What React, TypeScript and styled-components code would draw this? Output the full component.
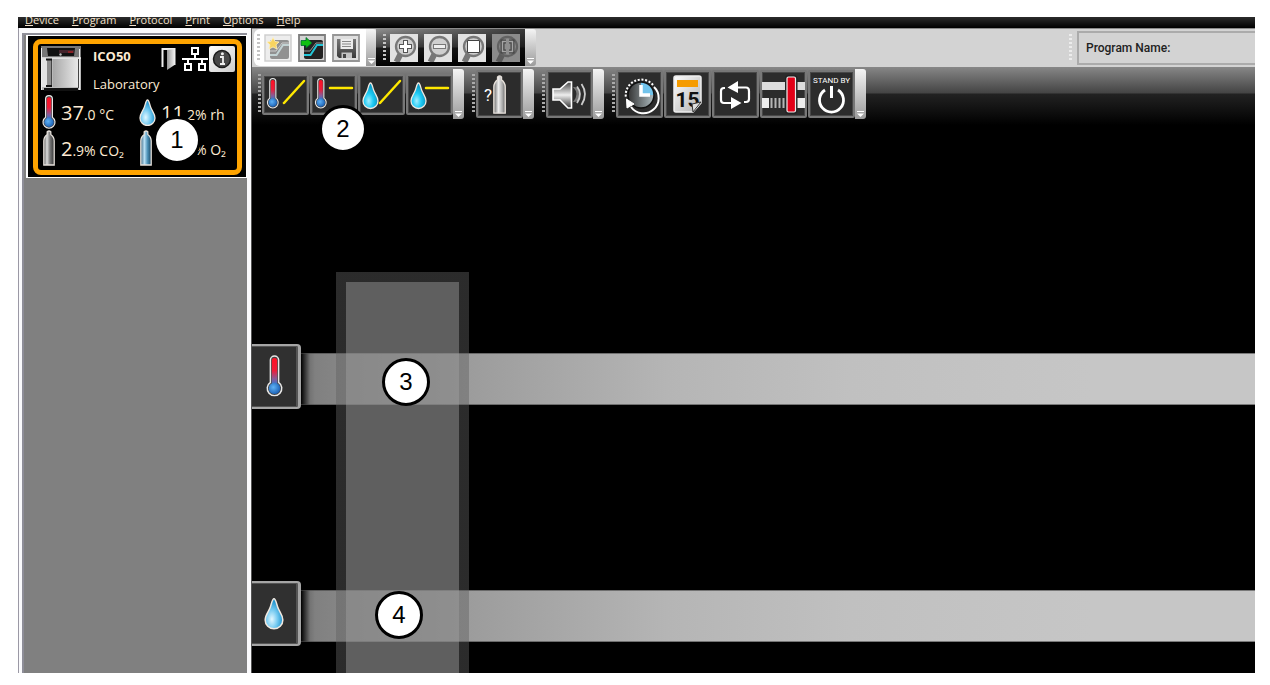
import React from 'react';
import styled, { createGlobalStyle, css } from 'styled-components';

const GlobalStyle = createGlobalStyle`
  *, *::before, *::after { box-sizing: border-box; }
  body { margin: 0; background: #fff; font-family: "Open Sans", "Noto Sans", sans-serif; }
  button { padding: 0; margin: 0; border: 0; background: none; color: inherit; font: inherit; cursor: pointer; }
  svg { display: block; flex: none; }
`;

const Page = styled.div`
  display: flex;
  min-height: 100vh;
  padding: 17px 15px 12px 18px;
`;

const AppWindow = styled.div`
  flex: 1;
  min-width: 0;
  display: flex;
  flex-direction: column;
  background: #000;
`;

const MenuBar = styled.nav`
  display: flex;
  align-items: flex-end;
  gap: 13px;
  height: 11px;
  padding: 0 7px;
  overflow: hidden;
  background: linear-gradient(#2c2c2c, #000);
`;

const MenuItem = styled.button`
  color: #f3e2cc;
  font-size: 11px;
  line-height: 16px;
  &::first-letter { text-decoration: underline; }
`;

const Body = styled.div`
  flex: 1;
  display: flex;
`;

const Sidebar = styled.aside`
  width: 234px;
  flex: none;
  padding: 5px 4px 0 3px;
  background: #fafafc;
  border-left: 1px solid #9b99a5;
  border-right: 1px solid #555;
`;

const DeviceList = styled.div`
  height: 100%;
  padding-left: 2px;
  background: #808080;
  border: solid #8e8e98;
  border-width: 2px 0 0 2px;
`;

const DeviceCard = styled.section`
  position: relative;
  padding: 3px 4px 2px 5px;
  background: #000;
  border: solid #fff;
  border-width: 1px 1px 1px 2px;
`;

const CardFrame = styled.div`
  height: 136px;
  padding: 2px 2px 0 3px;
  border: 5px solid #ffa400;
  border-radius: 8px;
  color: #fdebd3;
  font-size: 13px;
`;

const CardHead = styled.header`
  display: flex;
  height: 48px;
`;

const CardTitle = styled.div`
  flex: 1;
  padding-left: 12px;
`;

const DeviceName = styled.h2`
  margin: 0;
  font-size: 13px;
  line-height: 20px;
  font-weight: 700;
`;

const Place = styled.p`
  margin: 8px 0 0;
  line-height: 20px;
`;

const StatusIcons = styled.div`
  display: flex;
  align-items: flex-start;
  gap: 1px;
`;

const InfoButton = styled.button`
  width: 26px;
  height: 26px;
  border-radius: 2px;
  background: linear-gradient(135deg, #fff, #ccc);
`;

const Readings = styled.div`
  display: grid;
  grid-template-columns: 97px 1fr;
  grid-auto-rows: 36px;
  padding-left: 1px;
`;

const Reading = styled.div`
  display: flex;
  align-items: center;
  gap: 5px;
  white-space: nowrap;
`;

const Value = styled.span`
  display: flex;
  align-items: baseline;
  padding-top: 4px;
  font-size: 14px;
  line-height: 32px;
`;

const Big = styled.span<{ $room?: number }>`
  min-width: ${p => p.$room || 0}px;
  font-size: 20px;
`;

const Badge = styled.span<{ $x: number; $y: number }>`
  position: absolute;
  z-index: 3;
  left: ${p => p.$x}px;
  top: ${p => p.$y}px;
  width: 48px;
  height: 48px;
  border: 3px solid #000;
  border-radius: 50%;
  background: #fff;
  color: #000;
  font: 24px/42px "Liberation Sans", Arial, sans-serif;
  text-align: center;
`;

const Main = styled.main`
  flex: 1;
  min-width: 0;
  display: flex;
  flex-direction: column;
`;

const FileRow = styled.div`
  display: flex;
  height: 39px;
  padding: 0 0 1px 2px;
  background: #d3d3d3;
  border-top: 1px solid #8b8b8b;
`;

const Grip = styled.i<{ $tone?: string; $h: number }>`
  width: 4px;
  flex: none;
  height: ${p => p.$h}px;
  background: repeating-linear-gradient(${p => p.$tone || '#c4c4c4'} 0 2px, transparent 2px 4px);
  border-right: 1px solid transparent;
  background-clip: padding-box;
`;

const Strip = styled.div<{ $dark?: boolean }>`
  display: flex;
  align-items: center;
  gap: 6px;
  padding: ${p => (p.$dark ? '0 5px 0 7px' : '0 6px 0 3px')};
  border-radius: ${p => (p.$dark ? '0' : '6px 0 0 6px')};
  background: ${p => (p.$dark
    ? 'linear-gradient(90deg, transparent, rgba(0, 0, 0, 0.6)), linear-gradient(#8f8f8f, #444 48%, #1c1c1c 52%, #000)'
    : '#fff')};
  ${Grip} { margin-right: -3px; }
`;

const SmallButton = styled.button`
  width: 28px;
  height: 28px;
`;

const CapButton = styled.button<{ $w: number }>`
  width: ${p => p.$w}px;
  display: flex;
  align-items: flex-end;
  justify-content: center;
  padding-bottom: 2px;
  border-radius: 0 3px 3px 0;
  background: linear-gradient(#f4f4f4, #9b9b9b);
`;

const ProgramBar = styled.div`
  display: flex;
  align-items: center;
  gap: 4px;
  width: 186px;
  margin-left: auto;
`;

const ProgramField = styled.label`
  flex: 1;
  min-width: 0;
  height: 34px;
  display: flex;
  align-items: center;
  gap: 4px;
  padding-left: 7px;
  border: solid #ababab;
  border-width: 2px 0 2px 2px;
  color: #222;
  font: 500 12px/16px Roboto, sans-serif;
`;

const ProgramInput = styled.input`
  flex: 1;
  min-width: 0;
  border: 0;
  outline: 0;
  background: none;
  font: inherit;
`;

const Work = styled.div`
  flex: 1;
  position: relative;
  background: linear-gradient(#878787 0, #444 26px, #222 27px, #000 58px);
`;

const ToolRow = styled.div`
  position: relative;
  z-index: 2;
  display: flex;
  gap: 8px;
  padding: 2px 0 0 6px;
`;

const ToolGroup = styled.div`
  display: flex;
  align-items: stretch;
  height: 50px;
`;

const Tools = styled.div`
  display: flex;
  align-items: center;
  gap: 1px;
  ${Grip} { margin-right: -1px; }
`;

const ToolButton = styled.button<{ $low?: boolean }>`
  width: 47px;
  height: ${p => (p.$low ? 41 : 48)}px;
  display: flex;
  align-items: center;
  justify-content: center;
  overflow: hidden;
  background: #2c2c2c;
  border: 2px solid #777;
  border-radius: 2px;
  box-shadow: inset 0 0 0 1px #484848;
`;

const Lanes = styled.div`
  display: flex;
  flex-direction: column;
  gap: 172px;
  padding: 225px 0 27px;
`;

const Lane = styled.div`
  display: flex;
  align-items: flex-end;
`;

const LaneTab = styled.button`
  width: 49px;
  height: 65px;
  display: flex;
  align-items: center;
  justify-content: center;
  padding-right: 2px;
  background: #303030;
  border: solid #a5a5a5;
  border-width: 2px 3px 2px 0;
  border-radius: 0 4px 4px 0;
  box-shadow: inset -1px 0 0 1px #555;
`;

const LaneTrack = styled.div`
  flex: 1;
  height: 52px;
  margin-bottom: 4px;
  background: linear-gradient(90deg, #000 0, #737373 9px, #808080 14px, #858585 36px, #9c9c9c 168px, #b5b5b5 366px, #c0c0c0 549px, #c6c6c6 790px);
  border: solid rgba(70, 70, 70, 0.6);
  border-width: 1px 0;
`;

const TimeColumn = styled.div`
  position: absolute;
  z-index: 1;
  left: 84px;
  top: 205px;
  bottom: 0;
  width: 133px;
  padding: 10px 10px 0;
  display: flex;
  background: linear-gradient(rgba(96, 96, 96, 0.45), rgba(96, 96, 96, 0.45)) top / 100% 10px no-repeat,
    linear-gradient(rgba(96, 96, 96, 0.45), rgba(96, 96, 96, 0.45)) 0 10px / 10px 100% no-repeat,
    linear-gradient(rgba(96, 96, 96, 0.45), rgba(96, 96, 96, 0.45)) 123px 10px / 10px 100% no-repeat;
`;

const TimeFill = styled.div`
  flex: 1;
  background: rgba(138, 138, 138, 0.69);
`;

const SharedDefs = styled.svg`
  position: absolute;
`;

const Defs = () => (
  <SharedDefs width="0" height="0" aria-hidden="true">
    <defs>
      <linearGradient id="therm" x1="0" y1="0" x2="0" y2="1">
        <stop offset="0" stopColor="#ff1024" /><stop offset=".45" stopColor="#ee1c38" />
        <stop offset=".75" stopColor="#8a5a96" /><stop offset="1" stopColor="#2a7bd8" />
      </linearGradient>
      <radialGradient id="bulb" cx=".4" cy=".4" r=".7">
        <stop offset="0" stopColor="#5fb2f5" /><stop offset="1" stopColor="#1458ae" />
      </radialGradient>
      <radialGradient id="drop" cx=".38" cy=".68" r=".6">
        <stop offset="0" stopColor="#e2f7ff" /><stop offset=".55" stopColor="#70c8f0" /><stop offset="1" stopColor="#2596cf" />
      </radialGradient>
      <radialGradient id="cyanDrop" cx=".38" cy=".7" r=".6">
        <stop offset="0" stopColor="#a5f0ff" /><stop offset=".5" stopColor="#1ecbf5" /><stop offset="1" stopColor="#0b9ac5" />
      </radialGradient>
      <linearGradient id="steel">
        <stop offset="0" stopColor="#555" /><stop offset=".3" stopColor="#ddd" />
        <stop offset=".6" stopColor="#777" /><stop offset="1" stopColor="#333" />
      </linearGradient>
      <linearGradient id="brightSteel">
        <stop offset="0" stopColor="#666" /><stop offset=".4" stopColor="#eee" />
        <stop offset=".75" stopColor="#aaa" /><stop offset="1" stopColor="#666" />
      </linearGradient>
      <linearGradient id="blueSteel">
        <stop offset="0" stopColor="#416c88" /><stop offset=".35" stopColor="#b9e0f5" />
        <stop offset=".65" stopColor="#4c91b7" /><stop offset="1" stopColor="#1c4660" />
      </linearGradient>
      <linearGradient id="paper" x1="0" y1="0" x2="1" y2="1">
        <stop offset="0" stopColor="#fff" /><stop offset="1" stopColor="#b0b0b0" />
      </linearGradient>
      <linearGradient id="chrome" x1="0" y1="0" x2="1" y2="0">
        <stop offset="0" stopColor="#a8a8a8" /><stop offset="1" stopColor="#e8e8e8" />
      </linearGradient>
      <linearGradient id="horn" x1="0" y1="0" x2="0" y2="1">
        <stop offset="0" stopColor="#444" /><stop offset=".5" stopColor="#eee" /><stop offset="1" stopColor="#333" />
      </linearGradient>
      <linearGradient id="disk" x1="0" y1="0" x2="0" y2="1">
        <stop offset="0" stopColor="#777" /><stop offset="1" stopColor="#3a3a3a" />
      </linearGradient>
      <linearGradient id="door"><stop offset="0" stopColor="#999" /><stop offset="1" stopColor="#eee" /></linearGradient>
      <linearGradient id="face" x1="0" y1="0" x2="1" y2="0">
        <stop offset="0" stopColor="#333" /><stop offset="1" stopColor="#aebcc0" />
      </linearGradient>
    </defs>
  </SharedDefs>
);

const ThermShape = () => (
  <>
    <path d="M3.6 4a3.400 3.400 0 0 1 6.800 0V22.300a6 6 0 1 1-6.800 0Z" fill="#444" stroke="#e8e8e8" strokeWidth="1.200" />
    <path d="M4.800 4.500a2.200 2.200 0 0 1 4.400 0v20.500H4.800Z" fill="url(#therm)" />
    <circle cx="7" cy="27.300" r="4.700" fill="url(#bulb)" />
  </>
);
const Thermometer = ({ w = 14, h = 35 }: { w?: number; h?: number }) => (
  <svg width={w} height={h} viewBox="0 0 14 35"><ThermShape /></svg>
);

const DropShape = ({ fill }: { fill: string }) => (
  <path d="M8.500 1C10 1 10.500 4.800 11.600 8C13 12 16 14.600 16 19A7.500 7.500 0 0 1 1 19C1 14.600 4 12 5.400 8C6.500 4.800 7 1 8.500 1Z"
    fill={fill} stroke="#f0e8e0" strokeWidth="1.300" />
);
const Drop = ({ w = 17, h = 27 }: { w?: number; h?: number }) => (
  <svg width={w} height={h} viewBox="0 0 17 27"><DropShape fill="url(#drop)" /></svg>
);

const BottleShape = ({ fill }: { fill: string }) => (
  <path d="M4.200 1.800Q6 .2 7.800 1.800V4.500Q11.200 7 11.200 11V35H.8V11Q.8 7 4.200 4.500Z" fill={fill} stroke="#e6e0da" strokeWidth="1.300" />
);
const Bottle = ({ fill }: { fill: string }) => (
  <svg width="14" height="36" viewBox="-1 0 14 36"><BottleShape fill={fill} /></svg>
);

const Incubator = () => (
  <svg width="40" height="45" viewBox="0 0 40 45">
    <path d="M0 0H40V44H0Z" fill="#b9b9b9" />
    <path d="M0 0H40V12H0Z" fill="#777" />
    <path d="M6 2H34L33 10H7Z" fill="#111" />
    <path d="M18 4H33V7H18Z" fill="#43232b" /><path d="M27 6h5" stroke="#d02020" />
    <circle cx="19.500" cy="8.500" r="1.200" fill="#bbb" />
    <path d="M0 12H40" stroke="#eee" strokeWidth="1.500" />
    <path d="M12 13H37V41H12Z" fill="url(#chrome)" />
    <path d="M1 13H6V41H1Z" fill="#e3e3e3" />
    <path d="M6 13H11V41H6Z" fill="#8c8c8c" /><path d="M10.500 13V41M37.500 13V42" stroke="#444" />
    <path d="M5 13.500h6M5 40h6" stroke="#111" strokeWidth="2" />
    <path d="M3 42H37V45H3Z" fill="#111" /><path d="M38.500 3V44M.5 2V44" stroke="#eee" />
  </svg>
);

const Door = () => (
  <svg width="20" height="24" viewBox="0 0 20 24">
    <path d="M1.500 21V3H13.500V19" fill="none" stroke="#eee" strokeWidth="2" />
    <path d="M6 4L13.500 3V19L6 24Z" fill="url(#door)" />
  </svg>
);

const Network = () => (
  <svg width="26" height="26" viewBox="0 0 26 26" fill="none" stroke="#fff" strokeWidth="2">
    <path d="M10 2H16V8H10ZM3 18H9V24H3ZM17 18H23V24H17ZM13 8V13M0 13H26M6 13V18M20 13V18" />
  </svg>
);

const Info = () => (
  <svg width="26" height="26" viewBox="0 0 26 26">
    <circle cx="13" cy="13" r="8.500" fill="#484848" stroke="#1b1b1b" strokeWidth="1.500" />
    <path d="M11 11h3v7M11 18h5" stroke="#eee" strokeWidth="1.800" fill="none" />
    <circle cx="13.400" cy="7.800" r="1.500" fill="#eee" />
  </svg>
);

const Curve = ({ faded }: { faded?: boolean }) => (
  <>
    <rect x="6" y="6" width="19" height="19" rx="2" fill={faded ? '#919191' : '#222'} />
    <path d="M6 17H12L18 9H25" fill="none" stroke={faded ? '#ccc' : '#999'} strokeWidth="1" />
    <path d="M6 21H12.500L19 11H25" fill="none" stroke={faded ? '#c3d3d4' : '#22c6d8'} strokeWidth="2" />
  </>
);

const NewProgram = () => (
  <svg width="28" height="28" viewBox="0 0 28 28">
    <path d="M1 1H27V27H1Z" fill="#ededed" stroke="#cfcfcf" strokeWidth="1.500" />
    <Curve faded />
    <path d="M9 3.500L11 7.500L15 8L12 10.800L13 15L9 13L5 15L6 10.800L3 8L7 7.500Z" fill="#f8d460" stroke="#fff0bd" strokeWidth=".8" />
  </svg>
);
const OpenProgram = () => (
  <svg width="28" height="28" viewBox="0 0 28 28">
    <path d="M1 1H27V27H1Z" fill="#d4d4d4" stroke="#7d7d7d" strokeWidth="1.800" />
    <Curve />
    <path d="M3 6.500H8V3.500L14 9L8 14V11.500H3Z" fill="#10c010" stroke="#063" strokeWidth=".8" />
  </svg>
);
const Save = () => (
  <svg width="28" height="28" viewBox="0 0 28 28">
    <path d="M1 1H27V27H1Z" fill="#dedede" stroke="#969696" strokeWidth="1.800" />
    <path d="M5 5H24V24H7L5 22Z" fill="url(#disk)" /><path d="M8.500 5H21V15H8.500Z" fill="#ececec" />
    <path d="M10 7.500H19M10 10H19M10 12.500H19" stroke="#888" />
    <path d="M9.500 18.500H20V24H9.500Z" fill="#c4c4c4" /><path d="M11 20H14V24H11Z" fill="#444" />
  </svg>
);

const Magnifier = ({ children, dim }: { children: React.ReactNode; dim?: boolean }) => (
  <svg width="28" height="28" viewBox="0 0 28 28">
    <path d="M0 0H28V28H0Z" fill={dim ? '#8b8b8b' : '#e2e2e2'} />
    <path d="M10.500 20L6.500 28" stroke={dim ? '#5c5c5c' : '#777'} strokeWidth="6" />
    <circle cx="15.500" cy="12.500" r="9.500" fill={dim ? '#8f8f8f' : '#cfcfcf'} stroke={dim ? '#626262' : '#787878'} strokeWidth="2.300" />
    {children}
  </svg>
);

const Arrow = () => (
  <svg width="7" height="6" viewBox="0 0 7 6"><path d="M0 .5H7" stroke="#fff" /><path d="M0 2.500H7L3.500 6Z" fill="#fff" /></svg>
);

const ToolCanvas = ({ children, h = 43 }: { children: React.ReactNode; h?: number }) => (
  <svg width="43" height={h} viewBox={`0 0 43 ${h}`}>{children}</svg>
);

const Profile = ({ drop, flat }: { drop?: boolean; flat?: boolean }) => (
  <ToolCanvas h={37}>
    {drop
      ? <g transform="translate(2 6)"><DropShape fill="url(#cyanDrop)" /></g>
      : <g transform="translate(2.500 2) scale(.9)"><ThermShape /></g>}
    <path d={flat ? 'M18 12H40' : 'M20 27L40 5'} stroke="#ffe800" strokeWidth="2.500" strokeLinecap="round" />
  </ToolCanvas>
);

const GasBottle = () => (
  <ToolCanvas>
    <text x="6" y="28" fill="#fff" fontFamily="Roboto, sans-serif" fontSize="17">?</text>
    <g transform="translate(15 2) scale(1.090)"><BottleShape fill="url(#brightSteel)" /></g>
  </ToolCanvas>
);

const Speaker = () => (
  <ToolCanvas>
    <path d="M25 14Q32 21 25 29Q31 30 32 21Q31 13 25 14Z" fill="#777" />
    <path d="M5 16H12L20 9H23.500V35H20L12 27H5Z" fill="url(#horn)" stroke="#fff" strokeWidth="1.600" />
    <path d="M29 13.500Q35 21 29 30M33.500 11Q40.500 21 33.500 32" fill="none" stroke="#ccc" strokeWidth="1.800" />
  </ToolCanvas>
);

const Clock = () => (
  <ToolCanvas>
    <circle cx="23" cy="22" r="13" fill="url(#face)" />
    <path d="M23 22V9A13 13 0 0 1 36 22Z" fill="#72c4ec" />
    <path d="M23 12V22H32" fill="none" stroke="#fff" strokeWidth="3.500" />
    <path d="M36 14A15.300 15.300 0 1 1 13 34" fill="none" stroke="#fff" strokeWidth="2" />
    <circle cx="23" cy="22" r="13" fill="none" stroke="#111" strokeWidth="1.500" />
    <path d="M35 12A15.500 15.500 0 0 0 8 25" fill="none" stroke="#fff" strokeWidth="2" strokeDasharray="2 1.700" />
    <path d="M8.500 26L16 31L9 35Z" fill="#fff" stroke="#fff" />
  </ToolCanvas>
);

const Calendar = () => (
  <ToolCanvas>
    <path d="M10 3H33Q35 3 35 5V30L27 39H10Q8 39 8 37V5Q8 3 10 3Z" fill="url(#paper)" stroke="#eee" strokeWidth="1.500" />
    <path d="M11 7H32V14H11Z" fill="#f59b00" />
    <text x="21.500" y="34" textAnchor="middle" fill="#111" fontFamily="Roboto, sans-serif" fontWeight="700" fontSize="21">15</text>
    <path d="M35 29L27 39L26 31Z" fill="#ddd" stroke="#333" />
  </ToolCanvas>
);

const Loop = () => (
  <ToolCanvas>
    <path d="M11 15H10Q7 15 7 18V27Q7 30 10 30H17M22 14.500H32Q35 14.500 35 18V26Q35 29 32 29H30" fill="none" stroke="#fff" strokeWidth="2.200" />
    <path d="M24 8V20L13.500 14.500ZM17 24V36L27.500 30Z" fill="#fff" />
  </ToolCanvas>
);

const Slider = () => (
  <ToolCanvas>
    <path d="M0 9H43V17H0Z" fill="#ddd" />
    <path d="M0 25H7V35H0ZM34 25H43V35H34Z" fill="#eee" />
    <path d="M9.500 25V35M13.500 25V35M17.500 25V35M21.500 25V35" stroke="#b5b5b5" strokeWidth="2" />
    <rect x="25" y="4" width="8.500" height="35" rx="1.500" fill="#e30018" stroke="#222" strokeWidth="4" />
    <rect x="25" y="4" width="8.500" height="35" rx="1.500" fill="#e30018" stroke="#eee" strokeWidth="1.200" />
  </ToolCanvas>
);

const Standby = () => (
  <ToolCanvas>
    <text x="21.500" y="10" textAnchor="middle" fill="#fff" fontFamily="Roboto, sans-serif" fontSize="8">STAND BY</text>
    <path d="M15 17A12 12 0 1 0 28 17" fill="none" stroke="#fff" strokeWidth="2.800" />
    <path d="M21.500 13V25" stroke="#fff" strokeWidth="3" />
  </ToolCanvas>
);

type Tool = { label: string; icon: React.ReactNode; low?: boolean };

const toolGroups: Tool[][] = [
  [
    { label: 'Temperature ramp', icon: <Profile />, low: true },
    { label: 'Temperature hold', icon: <Profile flat />, low: true },
    { label: 'Humidity ramp', icon: <Profile drop />, low: true },
    { label: 'Humidity hold', icon: <Profile drop flat />, low: true },
  ],
  [{ label: 'Gas', icon: <GasBottle /> }],
  [{ label: 'Sound', icon: <Speaker /> }],
  [
    { label: 'Time', icon: <Clock /> },
    { label: 'Calendar', icon: <Calendar /> },
    { label: 'Loop', icon: <Loop /> },
    { label: 'Slider', icon: <Slider /> },
    { label: 'Standby', icon: <Standby /> },
  ],
];

const menus = ['Device', 'Program', 'Protocol', 'Print', 'Options', 'Help'];

export default function App() {
  return (
    <Page>
      <GlobalStyle />
      <Defs />
      <AppWindow>
        <MenuBar>
          {menus.map(m => <MenuItem key={m}>{m}</MenuItem>)}
        </MenuBar>
        <Body>
          <Sidebar>
            <DeviceList>
              <DeviceCard>
                <CardFrame>
                  <CardHead>
                    <Incubator />
                    <CardTitle>
                      <DeviceName>ICO50</DeviceName>
                      <Place>Laboratory</Place>
                    </CardTitle>
                    <StatusIcons>
                      <Door />
                      <Network />
                      <InfoButton aria-label="Info"><Info /></InfoButton>
                    </StatusIcons>
                  </CardHead>
                  <Readings>
                    <Reading><Thermometer /><Value><Big>37</Big>.0 °C</Value></Reading>
                    <Reading><Drop /><Value><Big $room={26}>11</Big>2% rh</Value></Reading>
                    <Reading><Bottle fill="url(#steel)" /><Value><Big>2</Big>.9% CO₂</Value></Reading>
                    <Reading><Bottle fill="url(#blueSteel)" /><Value><Big $room={37} />% O₂</Value></Reading>
                  </Readings>
                </CardFrame>
                <Badge $x={125} $y={80}>1</Badge>
              </DeviceCard>
            </DeviceList>
          </Sidebar>
          <Main>
            <FileRow>
              <Strip>
                <Grip $h={28} />
                <SmallButton aria-label="New program"><NewProgram /></SmallButton>
                <SmallButton aria-label="Open program"><OpenProgram /></SmallButton>
                <SmallButton aria-label="Save program"><Save /></SmallButton>
              </Strip>
              <CapButton $w={10} aria-label="File options"><Arrow /></CapButton>
              <Strip $dark>
                <Grip $h={28} />
                <SmallButton aria-label="Zoom in">
                  <Magnifier><path d="M15.500 6V19M9 12.500H22" stroke="#555" strokeWidth="5" /><path d="M15.500 7V18M10 12.500H21" stroke="#fff" strokeWidth="3" /></Magnifier>
                </SmallButton>
                <SmallButton aria-label="Zoom out">
                  <Magnifier><path d="M9 12.500H22" stroke="#777" strokeWidth="5" /><path d="M10 12.500H21" stroke="#eee" strokeWidth="3" /></Magnifier>
                </SmallButton>
                <SmallButton aria-label="Zoom to page">
                  <Magnifier><path d="M9.500 6.500H21.500V18.500H9.500Z" fill="#fff" stroke="#444" /></Magnifier>
                </SmallButton>
                <SmallButton aria-label="Zoom to selection">
                  <Magnifier dim><path d="M14 7.500H10.500V17.500H14M17 7.500H20.500V17.500H17" fill="none" stroke="#444" strokeWidth="4" /><path d="M14 7.500H10.500V17.500H14M17 7.500H20.500V17.500H17" fill="none" stroke="#a5a5a5" strokeWidth="1.500" /></Magnifier>
                </SmallButton>
              </Strip>
              <CapButton $w={11} aria-label="Zoom options"><Arrow /></CapButton>
              <ProgramBar>
                <Grip $h={28} $tone="#ececec" />
                <ProgramField>Program Name:<ProgramInput type="text" /></ProgramField>
              </ProgramBar>
            </FileRow>
            <Work>
              <ToolRow>
                {toolGroups.map((tools, i) => (
                  <ToolGroup key={i}>
                    <Tools>
                      <Grip $h={40} $tone="#aaa" />
                      {tools.map(t => (
                        <ToolButton key={t.label} $low={t.low} aria-label={t.label}>{t.icon}</ToolButton>
                      ))}
                    </Tools>
                    <CapButton $w={11} aria-label="More tools"><Arrow /></CapButton>
                  </ToolGroup>
                ))}
                <Badge $x={67} $y={38}>2</Badge>
              </ToolRow>
              <Lanes>
                <Lane>
                  <LaneTab aria-label="Temperature"><Thermometer w={17} h={43} /></LaneTab>
                  <LaneTrack />
                </Lane>
                <Lane>
                  <LaneTab aria-label="Humidity"><Drop w={20} h={33} /></LaneTab>
                  <LaneTrack />
                </Lane>
              </Lanes>
              <TimeColumn><TimeFill /></TimeColumn>
              <Badge $x={130} $y={291}>3</Badge>
              <Badge $x={123} $y={524}>4</Badge>
            </Work>
          </Main>
        </Body>
      </AppWindow>
    </Page>
  );
}
